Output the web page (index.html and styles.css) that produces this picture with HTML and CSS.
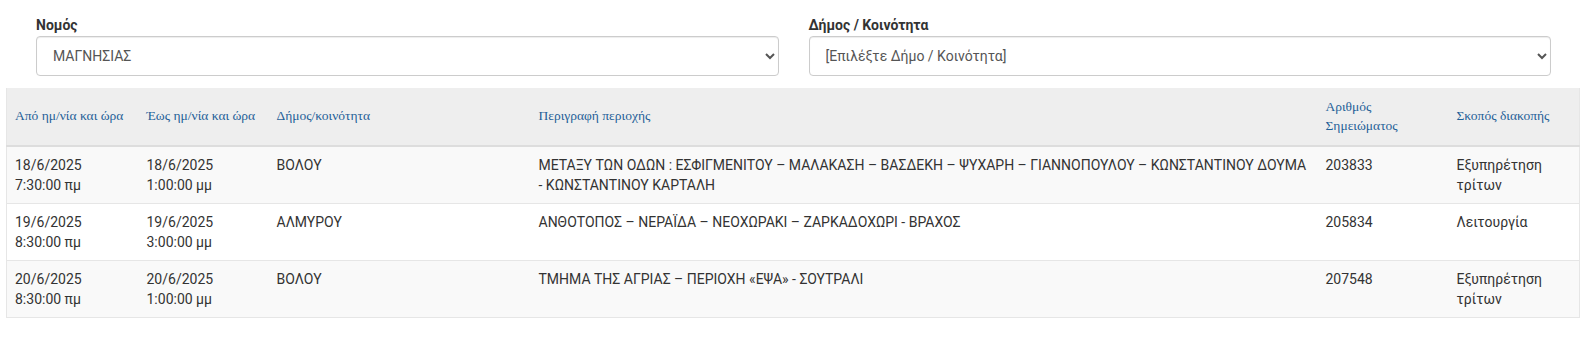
FILE: index.html
```html
<!DOCTYPE html>
<html lang="el">
<head>
<meta charset="utf-8">
<title>Διακοπές ρεύματος</title>
<link rel="stylesheet" href="styles.css">
</head>
<body>
<div class="page">
  <div class="filters">
    <div class="field">
      <label class="field-label" for="nomos">Νομός</label>
      <select id="nomos" class="field-select">
        <option>ΜΑΓΝΗΣΙΑΣ</option>
      </select>
    </div>
    <div class="field">
      <label class="field-label" for="dimos">Δήμος / Κοινότητα</label>
      <select id="dimos" class="field-select">
        <option>[Επιλέξτε Δήμο / Κοινότητα]</option>
      </select>
    </div>
  </div>

  <table class="outages">
    <colgroup>
      <col class="col-from">
      <col class="col-to">
      <col class="col-dimos">
      <col class="col-area">
      <col class="col-note">
      <col class="col-purpose">
    </colgroup>
    <thead>
      <tr>
        <th>Από ημ/νία και ώρα</th>
        <th>Έως ημ/νία και ώρα</th>
        <th>Δήμος/κοινότητα</th>
        <th>Περιγραφή περιοχής</th>
        <th>Αριθμός Σημειώματος</th>
        <th>Σκοπός διακοπής</th>
      </tr>
    </thead>
    <tbody>
      <tr>
        <td>18/6/2025<br>7:30:00 πμ</td>
        <td>18/6/2025<br>1:00:00 μμ</td>
        <td>ΒΟΛΟΥ</td>
        <td>ΜΕΤΑΞΥ ΤΩΝ ΟΔΩΝ : ΕΣΦΙΓΜΕΝΙΤΟΥ – ΜΑΛΑΚΑΣΗ – ΒΑΣΔΕΚΗ – ΨΥΧΑΡΗ – ΓΙΑΝΝΟΠΟΥΛΟΥ – ΚΩΝΣΤΑΝΤΙΝΟΥ ΔΟΥΜΑ - ΚΩΝΣΤΑΝΤΙΝΟΥ ΚΑΡΤΑΛΗ</td>
        <td>203833</td>
        <td>Εξυπηρέτηση τρίτων</td>
      </tr>
      <tr>
        <td>19/6/2025<br>8:30:00 πμ</td>
        <td>19/6/2025<br>3:00:00 μμ</td>
        <td>ΑΛΜΥΡΟΥ</td>
        <td>ΑΝΘΟΤΟΠΟΣ – ΝΕΡΑΪΔΑ – ΝΕΟΧΩΡΑΚΙ – ΖΑΡΚΑΔΟΧΩΡΙ - ΒΡΑΧΟΣ</td>
        <td>205834</td>
        <td>Λειτουργία</td>
      </tr>
      <tr>
        <td>20/6/2025<br>8:30:00 πμ</td>
        <td>20/6/2025<br>1:00:00 μμ</td>
        <td>ΒΟΛΟΥ</td>
        <td>ΤΜΗΜΑ ΤΗΣ ΑΓΡΙΑΣ – ΠΕΡΙΟΧΗ «ΕΨΑ» - ΣΟΥΤΡΑΛΙ</td>
        <td>207548</td>
        <td>Εξυπηρέτηση τρίτων</td>
      </tr>
    </tbody>
  </table>
</div>
</body>
</html>
```

FILE: styles.css
```css
* { box-sizing: border-box; }

body {
  margin: 0;
  background: #fff;
  font-family: Roboto, "Noto Sans", "Liberation Sans", sans-serif;
  font-size: 14px;
  line-height: 20px;
  color: #333;
}

.page {
  padding: 15px 10px 0 6px;
}

.filters {
  display: grid;
  grid-template-columns: 1fr 1fr;
  column-gap: 30px;
  padding: 0 29px 0 30px;
}

.field {
  display: flex;
  flex-direction: column;
}

.field-label {
  font-weight: 700;
  font-size: 14px;
  line-height: 20px;
  color: #333;
  margin-bottom: 1px;
}

.field-select {
  height: 40px;
  width: 100%;
  padding: 6px 12px;
  font-family: Roboto, "Noto Sans", "Liberation Sans", sans-serif;
  font-size: 14px;
  color: #555;
  background-color: #fff;
  border: 1px solid #ccc;
  border-radius: 4px;
  box-shadow: inset 0 1px 1px rgba(0,0,0,0.075);
}

.outages {
  width: 100%;
  margin-top: 12px;
  border-collapse: collapse;
  table-layout: fixed;
  border: 1px solid #e6e6e6;
  border-top: 0;
}

.col-from { width: 132px; }
.col-to { width: 130px; }
.col-dimos { width: 262px; }
.col-note { width: 131px; }
.col-purpose { width: 131px; }

.outages thead th {
  background: #eeeeee;
  font-family: "Liberation Serif", "DejaVu Serif", serif;
  font-weight: 400;
  font-size: 13.5px;
  line-height: 18.5px;
  color: #1f5f98;
  text-align: left;
  vertical-align: middle;
  padding: 10px 8px;
  border-bottom: 2px solid #dddddd;
}

.outages tbody td {
  padding: 8px 8px;
  vertical-align: top;
  border-top: 1px solid #e6e6e6;
  line-height: 20px;
}

.outages thead + tbody tr:first-child td {
  border-top: 0;
}

.outages tbody tr:nth-child(odd) td {
  background: #f9f9f9;
}
```
